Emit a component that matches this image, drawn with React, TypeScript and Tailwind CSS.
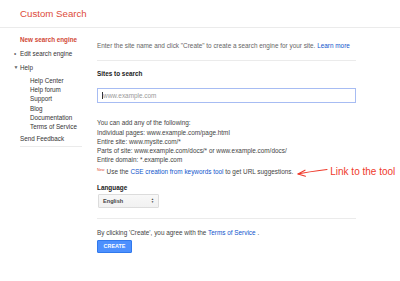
import React from "react";

const helpLinks = [
  "Help Center",
  "Help forum",
  "Support",
  "Blog",
  "Documentation",
  "Terms of Service",
];

const examples = [
  "Individual pages: www.example.com/page.html",
  "Entire site: www.mysite.com/*",
  "Parts of site: www.example.com/docs/* or www.example.com/docs/",
  "Entire domain: *.example.com",
];

const Sidebar = () => {
  return (
    <aside className="w-[97px] shrink-0 pl-[20px] pt-[7px] text-[6.3px] text-[#333]">
      <div className="leading-[9px] font-bold text-[#d14836]">New search engine</div>
      <div className="relative mt-[5px] leading-[9px]">
        <span className="absolute left-[-6px] top-0 text-[#666]">•</span>
        Edit search engine
      </div>
      <div className="relative mt-[5px] leading-[9px]">
        <span className="absolute left-[-6.5px] top-0 text-[5px] text-[#666]">▼</span>
        Help
      </div>
      <ul className="mt-[4px] pl-[10px]">
        {helpLinks.map((l) => (
          <li key={l} className="leading-[9.2px]">
            {l}
          </li>
        ))}
      </ul>
      <div className="mt-[3px] leading-[9px]">Send Feedback</div>
      <div className="mt-[3px] w-[62px] border-t border-[#ebebeb]" />
    </aside>
  );
};

const Arrow = () => (
  <svg width="32" height="10" viewBox="0 0 32 10" className="shrink-0">
    <path d="M31 2.5 C23 3.5 11 5 2 7" stroke="#ef3a2b" strokeWidth="1.1" fill="none" strokeLinecap="round" />
    <path d="M9 3.2 L2 7 L9.5 9.2" stroke="#ef3a2b" strokeWidth="1.1" fill="none" strokeLinecap="round" strokeLinejoin="round" />
  </svg>
);

const Main = () => {
  return (
    <main className="w-[259px] shrink-0 pt-[13px] text-[6.4px] text-[#444]">
      <p className="leading-[9px] whitespace-nowrap text-[#666]">
        Enter the site name and click "Create" to create a search engine for your site.{" "}
        <a className="text-[#15c]">Learn more</a>
      </p>
      <div className="mt-[10px] border-t border-[#ebebeb]" />
      <div className="mt-[8px] leading-[9px] font-bold text-[#222]">Sites to search</div>
      <div className="mt-[10px] flex h-[15px] items-center border border-[#a7bcf3] pl-[4px] text-[#999]">
        <span className="mr-[0.5px] h-[7px] w-[0.6px] bg-[#333]" />
        www.example.com
      </div>
      <p className="mt-[14.5px] leading-[9px]">You can add any of the following:</p>
      <ul className="mt-[1px]">
        {examples.map((e) => (
          <li key={e} className="leading-[9px] whitespace-nowrap">
            {e}
          </li>
        ))}
      </ul>
      <div className="mt-[4px] flex h-[9px] items-center whitespace-nowrap">
        <span className="mr-[2px] self-start text-[3.8px] leading-[5px] text-[#dd4b39]">New</span>
        <span>
          Use the <a className="text-[#15c]">CSE creation from keywords tool</a> to get URL suggestions.
        </span>
        <span className="ml-[3px] flex items-center">
          <Arrow />
          <span className="ml-[2px] text-[10px] leading-[10px] text-[#ef3a2b]">Link to the tool</span>
        </span>
      </div>
      <div className="mt-[6px] leading-[9px] font-bold text-[#222]">Language</div>
      <div className="ml-[1px] mt-[2.5px] flex h-[14px] w-[61px] items-center justify-between rounded-[1px] border border-[#dcdcdc] bg-gradient-to-b from-[#f8f8f8] to-[#f1f1f1] pl-[4px] pr-[4px] text-[5.6px] font-bold text-[#444]">
        <span>English</span>
        <span className="flex flex-col items-center text-[3px] leading-[3px] text-[#444]">
          <span>▲</span>
          <span>▼</span>
        </span>
      </div>
      <div className="mt-[10px] border-t border-[#ebebeb]" />
      <p className="mt-[8.5px] leading-[9px] whitespace-nowrap">
        By clicking 'Create', you agree with the <a className="text-[#15c]">Terms of Service</a> .
      </p>
      <button className="mt-[3.5px] flex h-[13px] w-[35px] items-center justify-center rounded-[1px] border border-[#3079ed] bg-[#4d90fe] text-[5.4px] font-bold text-white">
        CREATE
      </button>
    </main>
  );
};

export default function App() {
  return (
    <div
      className="h-[281px] w-[400px] overflow-hidden bg-white"
      style={{ fontFamily: '"Liberation Sans", Arial, sans-serif' }}
    >
      <header className="flex h-[28px] items-center border-b border-[#ebebeb] pl-[20px]">
        <h1 className="text-[9.7px] leading-none text-[#dd4b39]">Custom Search</h1>
      </header>
      <div className="flex">
        <Sidebar />
        <Main />
      </div>
    </div>
  );
}
